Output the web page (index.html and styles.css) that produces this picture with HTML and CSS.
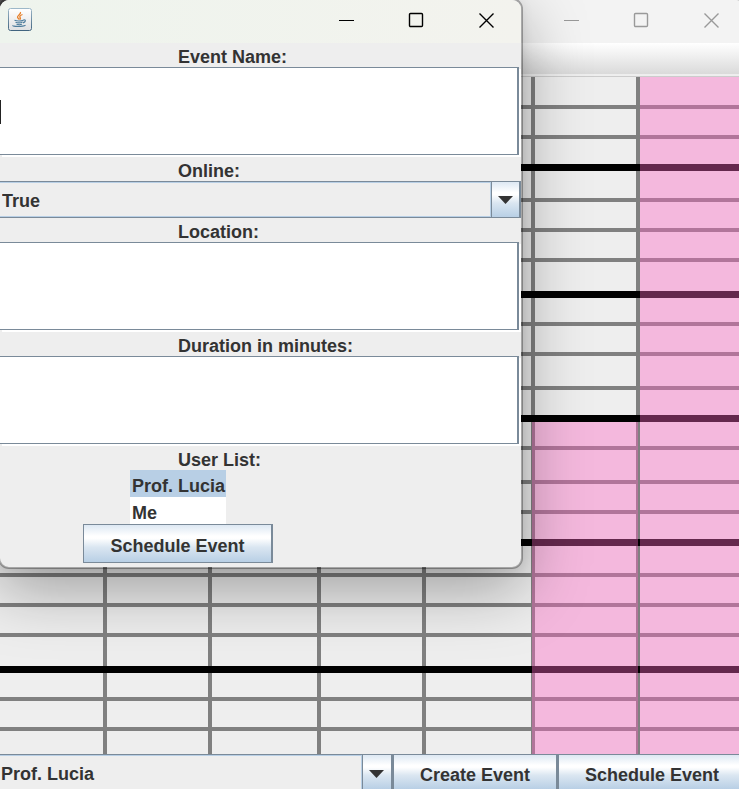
FILE: index.html
```html
<!DOCTYPE html>
<html lang="en">
<head>
<meta charset="utf-8">
<title>Schedule Event</title>
<link rel="stylesheet" href="styles.css">
</head>
<body>
<main class="window">
  <header class="titlebar titlebar-inactive">
    <div class="controls">
      <button type="button" aria-label="Minimize"><svg viewBox="0 0 16 16"><path d="M1 8.5h15"/></svg></button>
      <button type="button" aria-label="Maximize"><svg viewBox="0 0 16 16"><rect x="1.500" y="1.5" width="13" height="13" rx="1"/></svg></button>
      <button type="button" aria-label="Close"><svg viewBox="0 0 16 16"><path d="M1.500 1.500l14 14M15.500 1.500l-14 14"/></svg></button>
    </div>
  </header>
  <div class="menubar"></div>
  <section class="calendar" aria-label="Week calendar">
    <i class="col c1"></i><i class="col c2"></i><i class="col c3"></i><i class="col c4"></i><i class="col c5"></i><i class="col c6"></i>
    <i class="row r1"></i><i class="row r2"></i><i class="row r4"></i><i class="row r5"></i><i class="row r6"></i><i class="row r8"></i><i class="row r9"></i><i class="row r10"></i><i class="row r12"></i><i class="row r13"></i><i class="row r14"></i><i class="row r16"></i><i class="row r17"></i><i class="row r18"></i><i class="row r20"></i><i class="row r21"></i>
    <i class="row hour r3"></i><i class="row hour r7"></i><i class="row hour r11"></i><i class="row hour r15"></i><i class="row hour r19"></i>
    <div class="busy busy-partial"></div>
    <div class="busy busy-full"></div>
  </section>
  <footer class="actions">
    <div class="combo combo-user">
      <select aria-label="User"><option>Prof. Lucia</option><option>Me</option></select>
      <span class="combo-arrow"><svg viewBox="0 0 15 8"><path d="M0 0h15L7.500 8z"/></svg></span>
    </div>
    <button type="button" class="metal">Create Event</button>
    <button type="button" class="metal">Schedule Event</button>
  </footer>
</main>

<form class="dialog">
  <header class="titlebar titlebar-active">
    <svg class="java" viewBox="0 0 24 24" aria-hidden="true">
      <defs>
        <linearGradient id="edge" x1="0" y1="0" x2="0" y2="1"><stop offset="0" stop-color="#9db8c9"/><stop offset="1" stop-color="#41647f"/></linearGradient>
        <linearGradient id="face" x1="0" y1="0" x2="0" y2="1"><stop offset="0" stop-color="#fff"/><stop offset="1" stop-color="#dfe0e2"/></linearGradient>
      </defs>
      <rect x=".5" y=".5" width="23" height="22" rx="2" fill="url(#face)" stroke="url(#edge)"/>
      <path d="M12.500 4c1 2-3.500 3.500-3 5.200.2 1 1.300 1.600 1.800 2.300M14.500 6.500c-2 .8-3.300 1.800-2.500 3 .6.800.6 1.400-.3 2" fill="none" stroke="#e8822e" stroke-width="1.300"/>
      <path d="M6.500 12.300c2 .7 6.500.7 9 0M15.500 11.800c2.600-.5 2.400 2.200-.5 3M7.500 14.300c2 .6 5 .6 7 0M8.500 16.300c1.500.5 4 .5 5.500 0M5 17.300c-1.500 1.500 10 1.600 12.500-.1" fill="none" stroke="#4f7d9d" stroke-width="1.200"/>
    </svg>
    <div class="controls">
      <button type="button" aria-label="Minimize"><svg viewBox="0 0 16 16"><path d="M1 8.500h15"/></svg></button>
      <button type="button" aria-label="Maximize"><svg viewBox="0 0 16 16"><rect x="1.500" y="1.500" width="13" height="13" rx="1"/></svg></button>
      <button type="button" aria-label="Close"><svg viewBox="0 0 16 16"><path d="M1.500 1.500l14 14M15.500 1.500l-14 14"/></svg></button>
    </div>
  </header>
  <label class="caption" for="name">Event Name:</label>
  <input class="field field-current" id="name" type="text">
  <label class="caption" for="online">Online:</label>
  <div class="combo combo-online">
    <select id="online"><option>True</option><option>False</option></select>
    <span class="combo-arrow"><svg viewBox="0 0 15 8"><path d="M0 0h15L7.500 8z"/></svg></span>
  </div>
  <label class="caption" for="location">Location:</label>
  <input class="field" id="location" type="text">
  <label class="caption" for="duration">Duration in minutes:</label>
  <input class="field" id="duration" type="text">
  <label class="caption" for="users">User List:</label>
  <div class="centered">
    <select class="list" id="users" size="2"><option selected>Prof. Lucia</option><option>Me</option></select>
    <button type="button" class="metal submit">Schedule Event</button>
  </div>
</form>
</body>
</html>
```
FILE: styles.css
```css
* { box-sizing: border-box; }

:root {
  --ink: #333;
  --panel: #eee;
  --slate: #7a8a99;
  --steel: #b8cfe5;
  --metal: linear-gradient(#dde8f3 0, #fff 30%, #fff 36%, #dae6f1 60%, #b8cfe5 100%);
}

body {
  margin: 0;
  height: 100vh;
  overflow: hidden;
  background: #555;
  color: var(--ink);
  font: bold 18px/24px "Liberation Sans", Arial, sans-serif;
}

button, input, select { font: inherit; color: inherit; margin: 0; border-radius: 0; }

/* The main frame runs slightly past the right screen edge. */
.window {
  display: flex;
  flex-direction: column;
  width: calc(100% + 7px);
  height: 100vh;
  background: var(--panel);
  border-radius: 10px 10px 0 0;
  overflow: hidden;
}

.titlebar { display: flex; align-items: flex-start; height: 43px; flex: none; }
.titlebar-inactive { background: #f3f3f3; color: #999; }
.titlebar-active { background: linear-gradient(90deg, #eef4ed, #f3f3ee); color: #000; }

.controls { display: flex; margin-left: auto; }
.controls button {
  display: flex;
  align-items: center;
  justify-content: center;
  width: 70px;
  height: 40px;
  padding: 0;
  border: 0;
  background: none;
}
.controls svg { width: 16px; height: 16px; fill: none; stroke: currentColor; }
.controls rect { stroke-width: 1.4; }
.controls button:last-child svg { stroke-width: 1.4; }

.java { width: 24px; height: 24px; margin: 8px 0 0 8px; }

.menubar {
  flex: none;
  height: 34px;
  border-bottom: 1px solid #ccc;
  background: linear-gradient(#fff, #dadada) no-repeat 0 0 / 100% 31px;
}

.calendar {
  flex: 1;
  display: grid;
  grid-template-columns: 107px 105px 109px 105px 109px 105px 1fr;
  grid-template-rows: 32px 30px 32px 31px 30px 30px 36px 28px 30px 34px 32px 28px 34px 30px 32px 31px 30px 30px 36px 28px 30px 1fr;
}
.col { grid-row: 1 / -1; border-right: 4px solid #808080; }
.row { grid-column: 1 / -1; border-bottom: 4px solid #808080; }
.hour { border-bottom: 7px solid #000; }

.c1 { grid-column: 1; } .c2 { grid-column: 2; } .c3 { grid-column: 3; }
.c4 { grid-column: 4; } .c5 { grid-column: 5; } .c6 { grid-column: 6; }

.r1 { grid-row: 1; } .r2 { grid-row: 2; } .r3 { grid-row: 3; } .r4 { grid-row: 4; }
.r5 { grid-row: 5; } .r6 { grid-row: 6; } .r7 { grid-row: 7; } .r8 { grid-row: 8; }
.r9 { grid-row: 9; } .r10 { grid-row: 10; } .r11 { grid-row: 11; } .r12 { grid-row: 12; }
.r13 { grid-row: 13; } .r14 { grid-row: 14; } .r15 { grid-row: 15; } .r16 { grid-row: 16; }
.r17 { grid-row: 17; } .r18 { grid-row: 18; } .r19 { grid-row: 19; } .r20 { grid-row: 20; }
.r21 { grid-row: 21; }

.busy { background: rgba(252, 101, 194, .395); }
.busy-partial { grid-column: 6; grid-row: 12 / -1; margin: 0 2px 0 -3px; }
.busy-full { grid-column: 7; grid-row: 1 / -1; }

.actions { display: flex; flex: none; height: 35px; }

.metal {
  border: 1px solid var(--slate);
  background: var(--metal);
  padding: 0 26px;
  white-space: nowrap;
}
.actions .metal { border-width: 1px 0 0 3px; padding-top: 6px; }
.actions .metal:last-child { padding-right: 27px; }

.combo { display: flex; position: relative; border: 1px solid var(--slate); }
.combo select {
  flex: 1;
  min-width: 0;
  appearance: none;
  padding: 2px 0 0 2px;
  border: 1px solid var(--steel);
  border-left: 0;
  outline: 0;
  background: var(--panel);
}
.combo-arrow {
  display: flex;
  align-items: center;
  justify-content: center;
  width: 29px;
  border-left: 1px solid var(--slate);
  background: var(--metal);
  pointer-events: none;
}
.combo-arrow svg { width: 15px; height: 8px; fill: var(--ink); }
.combo-user { flex: 1; border-width: 1px 0 0; }
.combo-user select { padding-left: 1px; border-bottom: 0; }
.combo-user .combo-arrow { padding-top: 4px; }
.combo-online { height: 37px; border-width: 1px 2px 1px 0; }
.combo-online .combo-arrow { width: 28px; }

.dialog {
  position: absolute;
  left: -2px;
  top: -2px;
  width: 525px;
  border: 2px solid rgba(0, 0, 0, .3);
  border-radius: 11px;
  background: var(--panel);
  background-clip: padding-box;
  box-shadow: 0 20px 64px rgba(0, 0, 0, .34), 0 2px 12px rgba(0, 0, 0, .08);
  overflow: hidden;
  display: flex;
  flex-direction: column;
}

.caption { height: 24px; padding: 2px 0 0 178px; }

.field {
  height: 88px;
  margin: 0 2px 2px 0;
  padding: 0 2px;
  border: 1px solid var(--slate);
  border-width: 1px 2px 1px 0;
  outline: 0;
  background: #fff;
  box-shadow: 2px 2px 0 #fff;
}
.field-current { background: linear-gradient(#222, #222) no-repeat 0 32px / 1px 24px #fff; }

.centered { display: flex; flex-direction: column; align-items: center; width: 356px; padding-bottom: 4px; }

.list {
  width: 96px;
  height: 54px;
  padding: 0;
  border: 0;
  outline: 0;
  overflow: hidden;
  background: #fff;
  scrollbar-width: none;
}
.list option {
  height: 27px;
  min-height: 27px;
  padding: 6px 0 0 2px;
  font: bold 18px/21px "Liberation Sans", Arial, sans-serif;
  color: var(--ink);
}
.list option:checked { background: linear-gradient(var(--steel), var(--steel)); }

.submit { height: 39px; padding-top: 4px; border-right-width: 2px; }
```
